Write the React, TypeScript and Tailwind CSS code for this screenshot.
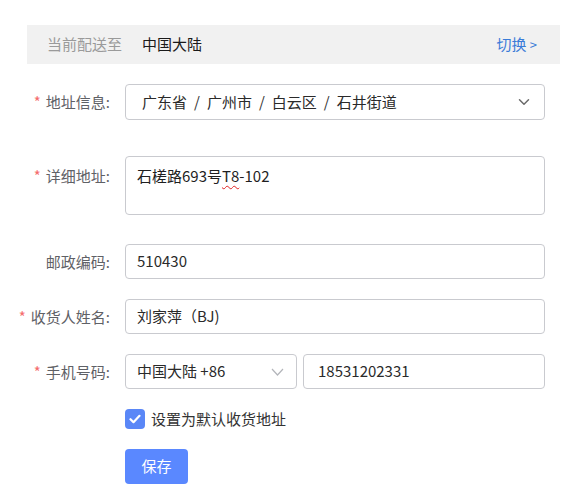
import { ChevronDown } from "lucide-react";

const FONT = "font-['Microsoft_YaHei','Noto_Sans_CJK_SC',sans-serif]";

function Label({ text, required }: { text: string; required?: boolean }) {
  return (
    <div className="w-[110px] shrink-0 text-right text-[15px] leading-[20px] text-[#5f6166]">
      {required && <span className="mr-[5px] text-[#f56c6c]">*</span>}
      {text}
    </div>
  );
}

function Field({ children, className = "" }: { children: React.ReactNode; className?: string }) {
  return (
    <div
      className={`flex h-[35px] items-center rounded-[4px] border border-[#c9cacf] bg-white px-[11px] text-[15px] text-[#2a2a2a] ${className}`}
    >
      {children}
    </div>
  );
}

function Sep() {
  return <span className="mx-[7px] text-[#333]">/</span>;
}

export default function App() {
  return (
    <div className={`min-h-[501px] w-[576px] bg-white ${FONT}`}>
      <div className="pt-[25px]">
        {/* 配送地区 */}
        <div className="ml-[27px] flex h-[39px] w-[533px] items-center bg-[#f1f1f1] pl-[20px] pr-[23px] text-[15px]">
          <span className="text-[#9a9a9a]">当前配送至</span>
          <span className="ml-[20px] text-[#1a1a1a]">中国大陆</span>
          <span className="ml-auto text-[#3a7bd8]">
            切换 <span className="text-[13px]">&gt;</span>
          </span>
        </div>

        {/* 地址信息 */}
        <div className="mt-[20px] flex h-[36px] items-center">
          <Label text="地址信息:" required />
          <div className="ml-[15px] flex h-[36px] w-[420px] items-center rounded-[4px] border border-[#c9cacf] pl-[16px] pr-[11px] text-[15px] text-[#2a2a2a]">
            <span>广东省</span>
            <Sep />
            <span>广州市</span>
            <Sep />
            <span>白云区</span>
            <Sep />
            <span>石井街道</span>
            <ChevronDown className="ml-auto h-[18px] w-[18px] text-[#6b6b6b]" strokeWidth={2} />
          </div>
        </div>

        {/* 详细地址 */}
        <div className="mt-[36px] flex items-start">
          <div className="pt-[10px]">
            <Label text="详细地址:" required />
          </div>
          <div className="ml-[15px] h-[59px] w-[420px] rounded-[4px] border border-[#c9cacf] px-[11px] pt-[9px] text-[15px] leading-[20px] text-[#1f1f1f]">
            石槎路693号
            <span className="underline decoration-[#e02424] decoration-wavy decoration-1 underline-offset-[3px]">T8</span>
            -102
          </div>
        </div>

        {/* 邮政编码 */}
        <div className="mt-[29px] flex items-center">
          <Label text="邮政编码:" />
          <Field className="ml-[15px] w-[420px]">510430</Field>
        </div>

        {/* 收货人 */}
        <div className="mt-[20px] flex items-center">
          <Label text="收货人姓名:" required />
          <Field className="ml-[15px] w-[420px]">刘家萍（BJ)</Field>
        </div>

        {/* 手机号码 */}
        <div className="mt-[20px] flex items-center">
          <Label text="手机号码:" required />
          <Field className="ml-[15px] w-[172px]">
            <span>中国大陆 +86</span>
            <svg className="ml-auto mr-[1px]" width="13" height="8" viewBox="0 0 13 8" fill="none">
              <path d="M1 1l5.5 6L12 1" stroke="#b3b5ba" strokeWidth="1.2" />
            </svg>
          </Field>
          <Field className="ml-[6px] w-[242px] pl-[14px]">18531202331</Field>
        </div>

        {/* 默认地址 */}
        <div className="mt-[20px] ml-[125px] flex h-[20px] items-center">
          <span className="flex h-[20px] w-[20px] items-center justify-center rounded-[4px] bg-[#5a87f7]">
            <svg width="12" height="10" viewBox="0 0 12 10" fill="none">
              <path d="M1.5 5.2l3 3 6-6.4" stroke="white" strokeWidth="2.2" strokeLinecap="round" strokeLinejoin="round" />
            </svg>
          </span>
          <span className="ml-[6px] text-[15px] text-[#333]">设置为默认收货地址</span>
        </div>

        {/* 保存 */}
        <div className="mt-[20px] ml-[125px]">
          <button
            type="button"
            className="flex h-[35px] w-[63px] items-center justify-center rounded-[4px] bg-[#5a88ff] text-[15px] text-white"
          >
            保存
          </button>
        </div>
      </div>
    </div>
  );
}
